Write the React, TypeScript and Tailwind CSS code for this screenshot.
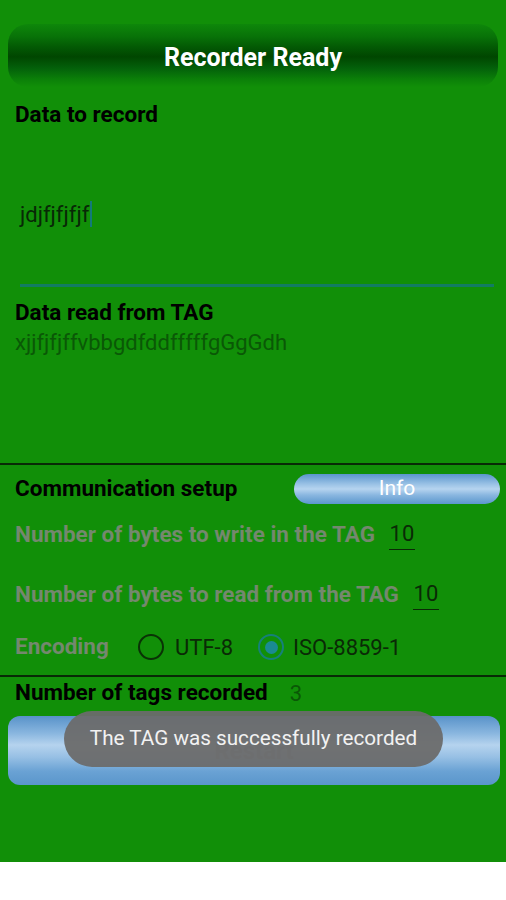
const READ_VALUE = "xjjfjfjffvbbgdfddfffffgGgGdh";

function Radio({ checked }: { checked: boolean }) {
  if (checked) {
    return (
      <span className="flex h-[26px] w-[26px] items-center justify-center rounded-full border-[2px] border-[#16807a]">
        <span className="h-[13px] w-[13px] rounded-full bg-[#1a8a92]" />
      </span>
    );
  }
  return <span className="h-[26px] w-[26px] rounded-full border-[2px] border-[#0a3206]" />;
}

function NumberField({ value }: { value: string }) {
  return (
    <span className="ml-[14px] inline-flex w-[26px] flex-col items-center">
      <span className="text-[22px] leading-[28px] text-[#0a2a06]">{value}</span>
      <span className="mt-[1px] h-[1px] w-full bg-[#0a2a06]" />
    </span>
  );
}

export default function App() {
  return (
    <div className="h-[900px] w-full bg-white font-['Roboto',sans-serif]">
      <div className="relative h-[862px] bg-[#118f08]">
        <div className="mx-2 flex h-[63px] translate-y-[24px] items-center justify-center rounded-[20px] bg-[linear-gradient(to_bottom,#0e870a_0%,#087208_20%,#035a04_36%,#004600_52%,#03600a_70%,#0b8008_88%,#118f08_100%)]">
          <span className="translate-y-[2px] text-[25px] font-bold text-white">Recorder Ready</span>
        </div>

        <div className="h-[24px]" />
        <p className="mt-[13px] pl-[15px] text-[22.5px] font-bold leading-[28px] text-black">
          Data to record
        </p>

        <div className="ml-[20px] mr-[12px] pt-[68px]">
          <p className="h-[28px] text-[22px] leading-[28px] text-[#082806]">
            jdjfjfjfjf
            <span className="ml-[1px] inline-block h-[26px] w-[2px] translate-y-[5px] bg-[#127a7a]" />
          </p>
          <div className="mt-[60px] h-[3px] bg-[#127c62]" />
        </div>

        <p className="mt-[11px] pl-[15px] text-[22.5px] font-bold leading-[28px] text-black">
          Data read from TAG
        </p>
        <p className="mt-[3px] pl-[15px] text-[22px] leading-[28px] text-[#0a5806]">{READ_VALUE}</p>

        <div className="mt-[106px] h-[2px] bg-[#082a06]" />

        <div className="mt-[9px] flex h-[30px] items-center justify-between pl-[15px] pr-[6px]">
          <span className="text-[22.5px] font-bold text-black">Communication setup</span>
          <button className="flex h-[30px] w-[206px] items-center justify-center rounded-full bg-[linear-gradient(to_bottom,#5a95cc_0%,#9cc3e6_35%,#b6d4ef_50%,#8ab7e0_70%,#5b97cd_100%)] text-[21px] text-white">
            Info
          </button>
        </div>

        <div className="mt-[16px] flex h-[28px] items-start pl-[15px]">
          <span className="text-[22.5px] font-bold leading-[28px] text-[#74886e]">
            Number of bytes to write in the TAG
          </span>
          <NumberField value="10" />
        </div>

        <div className="mt-[32px] flex h-[28px] items-start pl-[15px]">
          <span className="text-[22.5px] font-bold leading-[28px] text-[#74886e]">
            Number of bytes to read from the TAG
          </span>
          <NumberField value="10" />
        </div>

        <div className="mt-[25px] flex h-[28px] items-center pl-[15px]">
          <span className="w-[123px] text-[22.5px] font-bold text-[#74886e]">Encoding</span>
          <Radio checked={false} />
          <span className="ml-[11px] w-[83px] text-[22px] text-[#0a2a06]">UTF-8</span>
          <Radio checked />
          <span className="ml-[9px] text-[22px] text-[#0a2a06]">ISO-8859-1</span>
        </div>

        <div className="mt-[14px] h-[2px] bg-[#082a06]" />

        <div className="mt-[2px] flex h-[28px] items-center pl-[15px]">
          <span className="text-[22.5px] font-bold text-black">Number of tags recorded</span>
          <span className="ml-[22px] text-[22px] text-[#0a5806]">3</span>
        </div>

        <button className="mx-2 mt-[9px] flex h-[69px] w-[492px] items-center justify-center rounded-[12px] bg-[linear-gradient(to_bottom,#5892c9_0%,#89b6df_25%,#b5d3ee_42%,#96bfe4_60%,#6aa2d4_80%,#5a96cb_100%)] text-[24px] font-bold text-[#8a9aa8]">
          Restart
        </button>

        <div className="absolute left-[64px] top-[711px] flex h-[56px] w-[379px] items-center justify-center rounded-full bg-[#6b6b6b]/95">
          <span className="text-[20.7px] text-[#f2f2f2]">The TAG was successfully recorded</span>
        </div>
      </div>
    </div>
  );
}
